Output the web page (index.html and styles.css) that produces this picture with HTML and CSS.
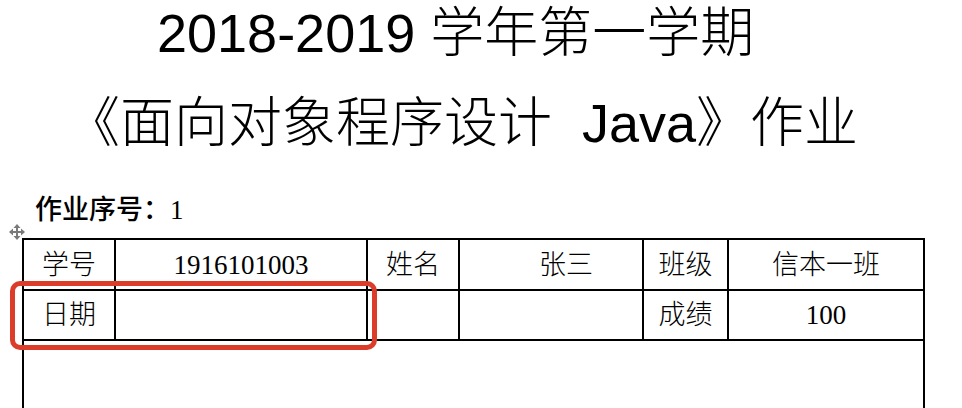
FILE: index.html
```html
<!DOCTYPE html>
<html lang="zh-CN">
<head>
<meta charset="utf-8">
<title>作业</title>
<link rel="stylesheet" href="styles.css">
</head>
<body>
<div class="doc">
  <h1 class="title title-1">2018-2019 学年第一学期</h1>
  <h2 class="title title-2">《面向对象程序设计&nbsp; Java》作业</h2>
  <p class="label">作业序号：1</p>
  <div class="table-wrap">
    <svg class="move-handle" width="16" height="16" viewBox="0 0 16 16" aria-hidden="true">
      <g fill="#7a7a7a">
        <path d="M8 0 L11.5 4 H4.5 Z"/>
        <path d="M8 16 L4.5 12 H11.5 Z"/>
        <path d="M0 8 L4 4.5 V11.5 Z"/>
        <path d="M16 8 L12 11.5 V4.5 Z"/>
        <rect x="7" y="3" width="2" height="10"/>
        <rect x="3" y="7" width="10" height="2"/>
      </g>
    </svg>
    <table class="info">
      <colgroup>
        <col class="c1"><col class="c2"><col class="c3"><col class="c4"><col class="c5"><col class="c6">
      </colgroup>
      <tr class="r1">
        <td>学号</td>
        <td>1916101003</td>
        <td>姓名</td>
        <td class="name">张三</td>
        <td>班级</td>
        <td>信本一班</td>
      </tr>
      <tr class="r2">
        <td>日期</td>
        <td></td>
        <td></td>
        <td></td>
        <td>成绩</td>
        <td>100</td>
      </tr>
      <tr class="r3">
        <td colspan="6"></td>
      </tr>
    </table>
  </div>
  <div class="highlight" aria-hidden="true"></div>
</div>
</body>
</html>
```
FILE: styles.css
```css
html, body {
  margin: 0;
  padding: 0;
  background: #ffffff;
}

body {
  width: 962px;
  height: 408px;
  overflow: hidden;
  color: #000;
}

.doc {
  position: relative;
}

.title {
  margin: 0;
  font-family: "Liberation Sans", "Noto Sans CJK SC", sans-serif;
  font-size: 54px;
  font-weight: 300;
  line-height: 60px;
  white-space: nowrap;
}

.title-1 {
  padding-top: 3px;
  padding-left: 157px;
}

.title-2 {
  margin-top: 30px;
  padding-left: 66px;
}

.label {
  margin: 42px 0 0 0;
  padding-left: 35px;
  font-family: "Liberation Serif", "Noto Sans CJK SC", serif;
  font-size: 27px;
  font-weight: 500;
  line-height: 30px;
}

.table-wrap {
  position: relative;
  margin-top: 13px;
  padding-left: 22px;
}

.move-handle {
  position: absolute;
  left: 9px;
  top: -14px;
}

.info {
  border-collapse: collapse;
  table-layout: fixed;
  width: 903px;
  font-family: "Liberation Serif", "Noto Sans CJK SC", serif;
  font-size: 27px;
  font-weight: 300;
}

.info td {
  border: 2px solid #000;
  padding: 0;
  text-align: center;
  vertical-align: middle;
  line-height: 30px;
}

.c1 { width: 92px; }
.c2 { width: 252px; }
.c3 { width: 92px; }
.c4 { width: 184px; }
.c5 { width: 85px; }
.c6 { width: 196px; }

.r1 td { height: 49px; }
.r2 td { height: 48px; }
.r3 td { height: 80px; }

.info td.name {
  padding-left: 30px;
}

.highlight {
  position: absolute;
  left: 10px;
  top: 281px;
  width: 357px;
  height: 59px;
  border: 5px solid #dc3d2a;
  border-radius: 10px;
}
```
